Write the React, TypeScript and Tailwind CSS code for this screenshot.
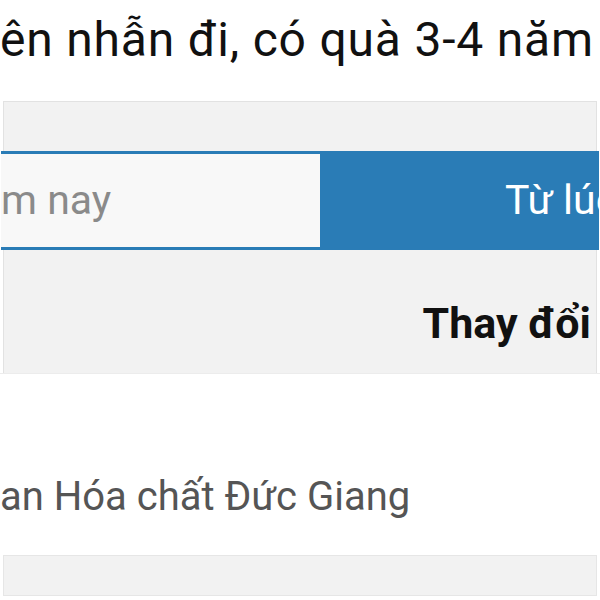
export default function App() {
  return (
    <div
      className="w-[600px] h-[600px] overflow-hidden bg-white text-[#111]"
      style={{ fontFamily: "Roboto, 'Noto Sans', sans-serif" }}
    >
      {/* Title */}
      <div className="h-[101px] pt-[12px]">
        <h1 className="flex whitespace-nowrap text-[48px] leading-[56px] tracking-[0.8px] font-normal">
          <span className="flex w-0 justify-end">Ki</span>
          <span>ên nhẫn đi, có quà 3-4 năm nay</span>
        </h1>
      </div>

      {/* Panel */}
      <div className="mx-[3px] border-x border-t border-[#e2e2e2] bg-[#f2f2f2]">
        <div className="h-[49px]" />

        {/* Tabs */}
        <div className="mx-[-3px] flex h-[99px] border-y-[3px] border-[#2a7cb6] text-[41px] whitespace-nowrap overflow-hidden">
          <div className="w-[320px] shrink-0 bg-[#f8f8f8] flex items-center border-r border-[#2a7cb6]">
            <span className="flex w-0 justify-end text-[#8a8a8a]">Hô</span>
            <span className="text-[#8a8a8a]">m nay</span>
          </div>
          <div className="flex-1 min-w-0 bg-[#2a7cb6] flex items-center pl-[184px] text-white">
            Từ lúc mua
          </div>
        </div>

        {/* Header row */}
        <div className="h-[123px] pt-[52px] text-right pr-[5px] text-[43px] leading-[43px] font-bold">
          Thay đổi
        </div>
      </div>

      {/* Data row */}
      <div className="h-[182px] pt-[103px] border-t border-[#ececec]">
        <div className="flex whitespace-nowrap text-[40px] leading-[40px] text-[#555]">
          <span className="flex w-0 justify-end">Công ty Cổ phần Tập đo</span>
          <span>an Hóa chất Đức Giang</span>
        </div>
      </div>

      {/* Next row */}
      <div className="mx-[3px] h-[41px] border border-[#e6e6e6] bg-[#f2f2f2]" />
    </div>
  );
}
